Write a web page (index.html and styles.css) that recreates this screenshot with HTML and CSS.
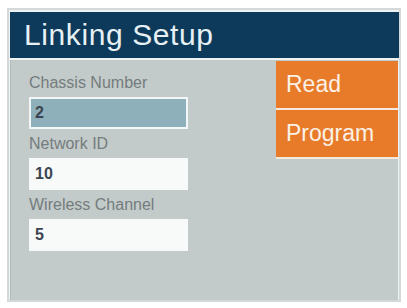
FILE: index.html
```html
<!DOCTYPE html>
<html lang="en">
<head>
  <meta charset="UTF-8">
  <title>Linking Setup</title>
  <link rel="stylesheet" href="styles.css">
</head>
<body>
  <div class="screen">
    <header class="title-bar">
      <h1>Linking Setup</h1>
    </header>
    <main class="panel">
      <form class="fields">
        <div class="field">
          <label for="chassis">Chassis Number</label>
          <div class="value selected" id="chassis">2</div>
        </div>
        <div class="field">
          <label for="network">Network ID</label>
          <div class="value" id="network">10</div>
        </div>
        <div class="field">
          <label for="channel">Wireless Channel</label>
          <div class="value" id="channel">5</div>
        </div>
      </form>
      <div class="actions">
        <button type="button">Read</button>
        <button type="button">Program</button>
      </div>
    </main>
  </div>
</body>
</html>
```

FILE: styles.css
```css
/* Base */
* {
  margin: 0;
  padding: 0;
  box-sizing: border-box;
}

body {
  background-color: #ffffff;
  font-family: 'Liberation Sans', Arial, sans-serif;
  padding: 8px 6px 6px 7px;
}

/* Outer frame */
.screen {
  width: 394px;
  height: 294px;
  border: 2px solid #d3d9da;
  background-color: #eef2f2;
  display: flex;
  flex-direction: column;
}

.title-bar {
  height: 46px;
  background-color: #0d3a5a;
  padding-left: 14px;
  display: flex;
  align-items: center;
  margin: 2px 0 2px 1px;
}

.title-bar h1 {
  font-weight: normal;
  font-size: 30px;
  letter-spacing: 0.6px;
  color: #e6f0f5;
}

/* Gray body */
.panel {
  flex: 1;
  background-color: #c3cbca;
  display: flex;
  justify-content: space-between;
  padding-top: 1px;
  margin: 0 1px 0 1px;
  border-left: 1px solid #b3bbbb;
}

.fields {
  padding: 13px 0 0 18px;
  display: flex;
  flex-direction: column;
  gap: 6px;
}

.field label {
  display: block;
  font-size: 16px;
  color: #747c7d;
  height: 23px;
}

.value {
  width: 159px;
  height: 32px;
  padding: 0 0 0 4px;
  background-color: #f8fafa;
  border: 2px solid #f8fafa;
  font-size: 16px;
  font-weight: bold;
  color: #3b4450;
  display: flex;
  align-items: center;
}

.value.selected {
  background-color: #8db0bb;
  border-color: #f4f7f7;
}

/* Orange buttons */
.actions {
  width: 122px;
  display: flex;
  flex-direction: column;
  align-self: flex-start;
  background-color: #f4e9dc;
  gap: 2px;
  padding-bottom: 2px;
}

.actions button {
  height: 47px;
  border: none;
  background-color: #e87b2a;
  color: #fbf1e6;
  font-family: 'Liberation Sans', Arial, sans-serif;
  font-size: 23px;
  text-align: left;
  padding-left: 10px;
}
```
